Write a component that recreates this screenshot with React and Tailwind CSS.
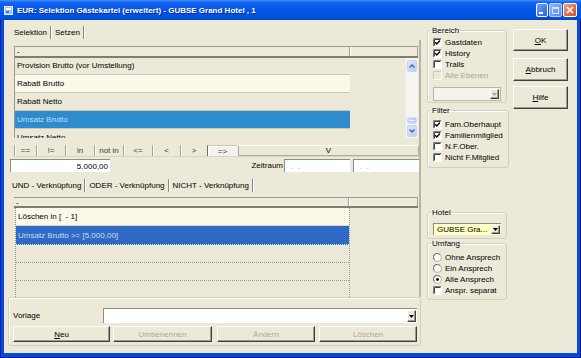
import React from "react";

const Tri = ({ color = "#000" }) => (
  <svg width="5" height="3" viewBox="0 0 5 3" className="shrink-0">
    <path d="M0 0H5L2.5 3Z" fill={color} />
  </svg>
);

function DropBtn({ disabled }) {
  return (
    <div className="w-[9px] h-full flex items-center justify-center bg-[#ECE9D8] border border-t-white border-l-white border-r-[#404040] border-b-[#404040] shadow-[inset_-1px_-1px_0_#9D9B8F]">
      <Tri color={disabled ? "#ACA899" : "#000"} />
    </div>
  );
}

function Box({ checked, disabled }) {
  return (
    <svg width="9" height="9" viewBox="0 0 9 9" className="shrink-0">
      <rect x="0" y="0" width="9" height="9" fill={disabled ? "#ECE9D8" : "#fff"} />
      <path d="M0.5 8.5V0.5H8.5" stroke={disabled ? "#C9C6B8" : "#808080"} fill="none" />
      {!disabled && <path d="M1.5 7.5V1.5H7.5" stroke="#404040" fill="none" />}
      <path d="M0.5 8.5H8.5V0.5" stroke="#fff" fill="none" />
      {checked && (
        <path d="M2.2 4.2L3.8 5.9L7 2.6" stroke="#000" strokeWidth="1.4" fill="none" />
      )}
    </svg>
  );
}

function Check({ checked, disabled, label }) {
  return (
    <div className={`h-[11px] flex items-center gap-[3px] ${disabled ? "text-[#ACA899]" : "text-black"}`}>
      <Box checked={checked} disabled={disabled} />
      <span className="whitespace-nowrap">{label}</span>
    </div>
  );
}

function Radio({ checked, label }) {
  return (
    <div className="h-[11px] flex items-center gap-[3px]">
      <svg width="9" height="9" viewBox="0 0 9 9" className="shrink-0">
        <circle cx="4.5" cy="4.5" r="4" fill="#fff" stroke="#B4B1A3" />
        <path d="M1.3 6.5A3.6 3.6 0 0 1 6.8 1.5" stroke="#6E6C62" fill="none" />
        {checked && <circle cx="4.5" cy="4.5" r="1.4" fill="#000" />}
      </svg>
      <span className="whitespace-nowrap">{label}</span>
    </div>
  );
}

function Group({ label, className, children }) {
  return (
    <fieldset className={`border border-[#D0D0BF] rounded-[3px] shadow-[inset_1px_1px_0_#fff] px-[5px] ${className}`}>
      <legend className="-ml-[2px] px-[1px] h-[9px] leading-[9px] text-black">{label}</legend>
      {children}
    </fieldset>
  );
}

function Btn({ className = "", disabled, children }) {
  return (
    <div
      className={`flex items-center justify-center bg-[#ECE9D8] border border-t-white border-l-white border-r-[#404040] border-b-[#404040] shadow-[inset_-1px_-1px_0_#9D9B8F] ${disabled ? "text-[#ACA899]" : "text-black"} ${className}`}
    >
      {children}
    </div>
  );
}

function ScrollArrow({ up }) {
  return (
    <div className="h-[12px] mx-[1px] rounded-[2px] bg-[linear-gradient(135deg,#DDE7FD,#BACDF8)] border border-[#C3D3FD] flex items-center justify-center">
      <svg width="6" height="4" viewBox="0 0 6 4">
        <path d={up ? "M0.5 3.5L3 1L5.5 3.5" : "M0.5 0.5L3 3L5.5 0.5"} stroke="#4D6185" strokeWidth="1.3" fill="none" />
      </svg>
    </div>
  );
}

function TitleBar() {
  return (
    <div className="h-[20px] shrink-0 flex items-center pl-[4px] pr-[4px] bg-[linear-gradient(180deg,#3D8EFD_0%,#1464F0_12%,#0858E8_40%,#0054E3_70%,#0052DF_88%,#0043CC_100%)]">
      <svg width="9" height="9" viewBox="0 0 9 9" className="shrink-0">
        <rect x="0.5" y="0.5" width="8" height="8" fill="#9CC3F7" stroke="#E8F1FD" />
        <rect x="2" y="2" width="5" height="2" fill="#fff" />
        <rect x="2" y="5" width="3" height="2" fill="#3B78D8" />
      </svg>
      <span className="ml-[4px] text-white font-bold text-[8px] whitespace-nowrap [text-shadow:1px_1px_0_#0A2A8F]">
        EUR: Selektion Gästekartei (erweitert) - GUBSE Grand Hotel , 1
      </span>
      <div className="ml-auto flex items-center gap-[1px]">
        <div className="w-[12px] h-[14px] rounded-[2px] border border-white bg-[linear-gradient(135deg,#6FA2FB,#2461E6)] flex items-end pl-[2px] pb-[2px]">
          <div className="w-[4px] h-[2px] bg-white" />
        </div>
        <div className="w-[13px] h-[14px] rounded-[2px] border border-[#B9D1FA] bg-[linear-gradient(135deg,#8DB5FB,#5A8CEF)] flex items-center justify-center">
          <div className="w-[7px] h-[7px] border border-[#D6E4FC] border-t-2" />
        </div>
        <div className="w-[14px] h-[14px] rounded-[2px] border border-white bg-[linear-gradient(135deg,#F0A088,#D8491F)] flex items-center justify-center">
          <svg width="8" height="8" viewBox="0 0 8 8">
            <path d="M1 1L7 7M7 1L1 7" stroke="#fff" strokeWidth="1.6" />
          </svg>
        </div>
      </div>
    </div>
  );
}

function FlatTab({ children, first }) {
  return (
    <div className={`h-[13px] flex items-center px-[3px] border-r border-[#8A887C] shadow-[1px_0_0_#fff] whitespace-nowrap ${first ? "" : "ml-[1px]"}`}>
      {children}
    </div>
  );
}

function ListHeader({ h = "h-[12px]" }) {
  return (
    <div className={`${h} shrink-0 flex border-t border-[#9D9B8F] border-b-2 border-b-[#7F7D72] bg-[#EEEBDD]`}>
      <div className="w-[335px] pl-[2px] flex items-center border-r border-[#A7A496] shadow-[1px_0_0_#fff]">-</div>
      <div className="flex-1 border-r border-[#A7A496]" />
    </div>
  );
}

const rows1 = [
  { t: "Provision Brutto (vor Umstellung)", bg: "bg-[#ECE9D8]", c: "text-black", h: "h-[17px]" },
  { t: "Rabatt Brutto", bg: "bg-[#FBF8EA]", c: "text-black", h: "h-[18px]" },
  { t: "Rabatt Netto", bg: "bg-[#ECE9D8]", c: "text-black", h: "h-[18px]" },
  { t: "Umsatz Brutto", bg: "bg-[#2E8CCD]", c: "text-[#B9E0FA]", h: "h-[18px]" },
  { t: "Umsatz Netto", bg: "bg-[#ECE9D8]", c: "text-black", h: "h-[18px]" },
];

const ops = [
  ["==", "w-[22px]"],
  ["!=", "w-[29px]"],
  ["in", "w-[29px]"],
  ["not in", "w-[29px]"],
  ["<=", "w-[29px]"],
  ["<", "w-[28px]"],
  [">", "w-[27px]"],
];

function LeftColumn() {
  return (
    <div className="w-[413px] shrink-0 flex flex-col">
      <div className="h-[16px] flex items-center pl-[3px]">
        <FlatTab first>Selektion</FlatTab>
        <FlatTab>Setzen</FlatTab>
      </div>
      <div className="h-[257px] flex flex-col border-r-2 border-r-[#B7B4A5] overflow-hidden">
        {/* list 1 */}
        <div className="mt-[6px] ml-[6px] w-[404px] h-[92px] shrink-0 flex flex-col border-l border-[#9D9B8F]">
          <ListHeader />
          <div className="flex-1 flex overflow-hidden">
            <div className="w-[335px] flex flex-col overflow-hidden">
              {rows1.map((r) => (
                <div key={r.t} className={`${r.h} shrink-0 flex items-center pl-[2px] pb-[1px] border-b border-[#CBC8B8] ${r.bg} ${r.c}`}>
                  {r.t}
                </div>
              ))}
            </div>
            <div className="flex-1" />
            <div className="w-[13px] flex flex-col bg-[#F5F4EF] border-l border-[#EDEBE3]">
              <div className="mt-[2px]">
                <ScrollArrow up />
              </div>
              <div className="flex-1 flex flex-col justify-end">
                <div className="h-[7px] mx-[1px] mb-[1px] rounded-[2px] bg-[linear-gradient(90deg,#C9D8FC,#B5CAF7)] border border-[#D2DEFC] flex flex-col items-center justify-center gap-[1px]">
                  <div className="w-[5px] h-px bg-[#EEF3FF]" />
                </div>
              </div>
              <div className="mb-[1px]">
                <ScrollArrow />
              </div>
            </div>
          </div>
        </div>

        {/* operator row */}
        <div className="mt-[7px] ml-[6px] w-[405px] h-[12px] shrink-0 flex border-b border-[#D8D5C6] text-[#3C3C3C]">
          {ops.map(([t, w]) => (
            <div key={t} className={`${w} flex items-center justify-center border-l border-[#A7A496] shadow-[inset_1px_0_0_#fff]`}>
              {t}
            </div>
          ))}
          <div className="w-[30px] flex items-center justify-center border-l border-t border-l-[#6F6D62] border-t-[#C9C6B6] bg-[#F3F2EC] shadow-[inset_1px_1px_0_#fff]">
            =&gt;
          </div>
          <div className="flex-1 flex items-center justify-center border border-[#B1AE9F] border-t-white ml-[1px] text-black">
            V
          </div>
        </div>

        {/* input row */}
        <div className="mt-[2px] h-[13px] shrink-0 flex items-center">
          <div className="ml-[2px] w-[100px] h-full bg-white border-t border-l border-[#8F8D82] flex items-center justify-end pr-[2px]">
            5.000,00
          </div>
          <div className="ml-auto flex items-center h-full">
            <span className="mr-[1px]">Zeitraum</span>
            <div className="w-[66px] h-full bg-white border-t border-l border-[#8F8D82] pl-[6px] text-[#9A9A9A] whitespace-pre flex items-center">.  .</div>
            <div className="ml-[3px] w-[66px] h-full bg-white border-t border-l border-[#8F8D82] pl-[6px] text-[#9A9A9A] whitespace-pre flex items-center">.  .</div>
          </div>
        </div>

        {/* tabs 2 */}
        <div className="mt-[5px] h-[16px] shrink-0 flex items-center pl-[1px]">
          <FlatTab first>UND - Verknüpfung</FlatTab>
          <FlatTab>ODER - Verknüpfung</FlatTab>
          <FlatTab>NICHT - Verknüpfung</FlatTab>
        </div>

        {/* list 2 */}
        <div className="mt-[4px] ml-[6px] w-[404px] flex-1 flex flex-col">
          <ListHeader h="h-[11px]" />
          <div className="flex-1 flex overflow-hidden">
            <div className="ml-[1px] w-[335px] flex flex-col border-l border-r border-dotted border-[#9A9890]">
              <div className="h-[18px] shrink-0 flex items-center pl-[2px] bg-[#FBF8EA] border-b border-[#DEDACB] whitespace-pre">
                Löschen in [  - 1]
              </div>
              <div className="h-[19px] shrink-0 flex items-center pl-[2px] bg-[#316AC5] text-[#C9DCFF] border-b border-dotted border-[#D8E4F8]">
                Umsatz Brutto &gt;= [5.000,00]
              </div>
              <div className="h-[18px] shrink-0 border-b border-dotted border-[#9A9890]" />
              <div className="h-[18px] shrink-0 border-b border-dotted border-[#9A9890]" />
              <div className="flex-1" />
            </div>
          </div>
        </div>
      </div>

      {/* Vorlage */}
      <div className="h-[49px] shrink-0 border border-[#D0D0BF] rounded-[3px] shadow-[inset_1px_1px_0_#fff] flex flex-col pl-[4px] pr-[3px]">
        <div className="mt-[10px] h-[15px] flex items-center">
          <span>Vorlage</span>
          <div className="ml-auto w-[314px] h-full bg-white border-t border-l border-[#8F8D82] flex justify-end p-[1px]">
            <DropBtn />
          </div>
        </div>
        <div className="mt-[3px] h-[16px] flex">
          <Btn className="w-[97px]">
            <span>
              <span className="underline">N</span>eu
            </span>
          </Btn>
          <Btn className="ml-[3px] w-[99px]" disabled>
            Umbenennen
          </Btn>
          <Btn className="ml-[5px] w-[98px]" disabled>
            Ändern
          </Btn>
          <Btn className="ml-[4px] w-[98px]" disabled>
            Löschen
          </Btn>
        </div>
      </div>
    </div>
  );
}

function RightColumn() {
  return (
    <div className="ml-[6px] w-[80px] shrink-0 flex flex-col pt-[2px]">
      <Group label="Bereich" className="h-[77px]">
        <div className="pt-[2px] flex flex-col">
          <Check checked label="Gastdaten" />
          <Check checked label="History" />
          <Check label="Trails" />
          <Check disabled label="Alle Ebenen" />
        </div>
        <div className="mt-[6px] h-[14px] bg-[#F4F3EE] border border-[#B8B5A8] flex justify-end p-[1px]">
          <DropBtn disabled />
        </div>
      </Group>
      <Group label="Filter" className="mt-[3px] h-[62px]">
        <div className="pt-[4px] flex flex-col">
          <Check checked label="Fam.Oberhaupt" />
          <Check checked label="Familienmitglied" />
          <Check label="N.F.Ober." />
          <Check label="Nicht F.Mitglied" />
        </div>
      </Group>
      <Group label="Hotel" className="mt-[40px] h-[31px]">
        <div className="mt-[6px] h-[12px] bg-[#FFFFC6] border-t border-l border-[#8F8D82] flex items-center justify-between pl-[3px] p-[1px]">
          <span className="whitespace-nowrap">GUBSE Gra...</span>
          <DropBtn />
        </div>
      </Group>
      <Group label="Umfang" className="h-[61px]">
        <div className="pt-[4px] flex flex-col">
          <Radio label="Ohne Ansprech" />
          <Radio label="Ein Ansprech" />
          <Radio checked label="Alle Ansprech" />
          <Check label="Anspr. separat" />
        </div>
      </Group>
    </div>
  );
}

function ButtonColumn() {
  return (
    <div className="ml-[6px] w-[55px] shrink-0 flex flex-col pt-[5px]">
      <Btn className="h-[22px]">
        <span>
          <span className="underline">O</span>K
        </span>
      </Btn>
      <Btn className="mt-[7px] h-[23px]">
        <span>
          <span className="underline">A</span>bbruch
        </span>
      </Btn>
      <Btn className="mt-[5px] h-[23px]">
        <span>
          <span className="underline">H</span>ilfe
        </span>
      </Btn>
    </div>
  );
}

export default function App() {
  return (
    <div className="w-[581px] h-[358px] flex flex-col bg-[#0A48DA] shadow-[inset_0_-1px_0_#001B8C,inset_-1px_0_0_#001B8C,inset_1px_0_0_#0026A8] font-['Liberation_Sans',Arial,sans-serif] text-[8px] leading-[9px] text-black overflow-hidden">
      <TitleBar />
      <div className="flex-1 mx-[4px] mb-[5px] bg-[#ECE9D8] flex pl-[4px] pt-[4px] overflow-hidden">
        <LeftColumn />
        <RightColumn />
        <ButtonColumn />
      </div>
    </div>
  );
}
